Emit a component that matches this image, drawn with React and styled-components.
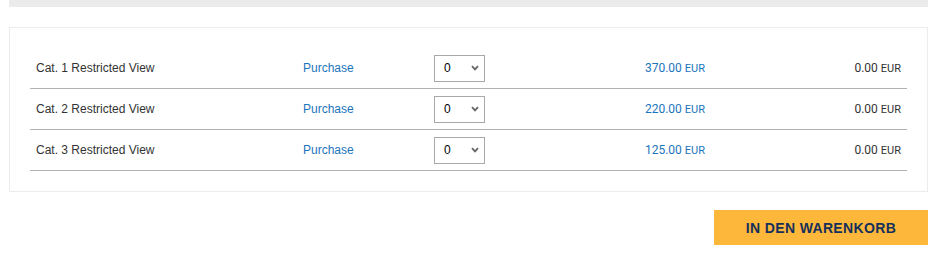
import React from "react";
import styled, { createGlobalStyle } from "styled-components";

const GlobalStyle = createGlobalStyle`
  body {
    margin: 0;
    background: #ffffff;
    font-family: "Liberation Sans", Arial, sans-serif;
  }
`;

const Page = styled.div`
  padding: 0 8px 0 9px;
`;

const TopBar = styled.div`
  height: 7px;
  background: #ebebeb;
`;

const Panel = styled.div`
  margin-top: 20px;
  border: 1px solid #ececec;
  padding: 20px;
`;

const Row = styled.div`
  display: grid;
  grid-template-columns: 267px 131px 70px 201px 1fr;
  align-items: center;
  height: 40px;
  border-bottom: 1px solid #b3b3b3;
  padding: 0 6px;
  font-size: 12px;
  color: #333333;
`;

const Name = styled.span`
  font-family: "Liberation Sans", Arial, sans-serif;
`;

const Link = styled.a`
  color: #1b75bc;
  text-decoration: none;
`;

const Select = styled.div`
  box-sizing: border-box;
  width: 51px;
  height: 27px;
  border: 1px solid #a9a9a9;
  display: flex;
  align-items: center;
  justify-content: space-between;
  padding: 0 5px 0 9px;
  font-size: 12px;
  color: #000;
`;

const Amount = styled.span`
  font-family: Roboto, "Liberation Sans", sans-serif;
  text-align: right;
  font-size: 12px;
  color: ${(p) => (p.$blue ? "#1b75bc" : "#333333")};
  small {
    font-size: 11px;
  }
`;

const Footer = styled.div`
  display: flex;
  justify-content: flex-end;
  margin-top: 18px;
`;

const Button = styled.button`
  width: 214px;
  height: 35px;
  border: none;
  background: #fdb83b;
  color: #15305a;
  font-family: "Liberation Sans", Arial, sans-serif;
  font-weight: bold;
  font-size: 14px;
  letter-spacing: 0.35px;
`;

const Chevron = () => (
  <svg width="8" height="6" viewBox="0 0 8 6">
    <path d="M1 1.2 L4 4.4 L7 1.2" fill="none" stroke="#666" strokeWidth="1.8" />
  </svg>
);

const rows = [
  { name: "Cat. 1 Restricted View", price: "370.00" },
  { name: "Cat. 2 Restricted View", price: "220.00" },
  { name: "Cat. 3 Restricted View", price: "125.00" },
];

export default function App() {
  return (
    <Page>
      <GlobalStyle />
      <TopBar />
      <Panel>
        {rows.map((r) => (
          <Row key={r.name}>
            <Name>{r.name}</Name>
            <Link href="#">Purchase</Link>
            <Select>
              <span>0</span>
              <Chevron />
            </Select>
            <Amount $blue>
              {r.price} <small>EUR</small>
            </Amount>
            <Amount>
              0.00 <small>EUR</small>
            </Amount>
          </Row>
        ))}
      </Panel>
      <Footer>
        <Button>IN DEN WARENKORB</Button>
      </Footer>
    </Page>
  );
}
